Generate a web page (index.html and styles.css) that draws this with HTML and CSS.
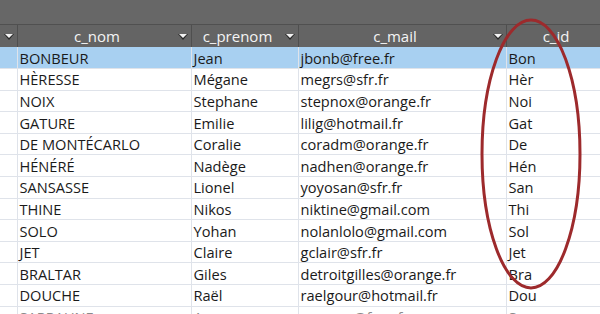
FILE: index.html
```html
<!DOCTYPE html>
<html lang="fr">
<head>
<meta charset="utf-8">
<link rel="stylesheet" href="styles.css">
</head>
<body>
<div class="sheet">
  <div class="topband"></div>
  <table class="grid">
    <colgroup>
      <col class="c0"><col class="c1"><col class="c2"><col class="c3"><col class="c4">
    </colgroup>
    <thead>
      <tr>
        <th><span class="arrow"></span></th>
        <th><span class="lbl">c_nom</span><span class="arrow"></span></th>
        <th><span class="lbl">c_prenom</span><span class="arrow"></span></th>
        <th><span class="lbl">c_mail</span><span class="arrow"></span></th>
        <th><span class="lbl">c_id</span><span class="arrow"></span></th>
      </tr>
    </thead>
    <tbody>
      <tr class="sel"><td></td><td>BONBEUR</td><td>Jean</td><td>jbonb@free.fr</td><td>Bon</td></tr>
      <tr><td></td><td>HÈRESSE</td><td>Mégane</td><td>megrs@sfr.fr</td><td>Hèr</td></tr>
      <tr><td></td><td>NOIX</td><td>Stephane</td><td>stepnox@orange.fr</td><td>Noi</td></tr>
      <tr><td></td><td>GATURE</td><td>Emilie</td><td>lilig@hotmail.fr</td><td>Gat</td></tr>
      <tr><td></td><td>DE MONTÉCARLO</td><td>Coralie</td><td>coradm@orange.fr</td><td>De</td></tr>
      <tr><td></td><td>HÉNÉRÉ</td><td>Nadège</td><td>nadhen@orange.fr</td><td>Hén</td></tr>
      <tr><td></td><td>SANSASSE</td><td>Lionel</td><td>yoyosan@sfr.fr</td><td>San</td></tr>
      <tr><td></td><td>THINE</td><td>Nikos</td><td>niktine@gmail.com</td><td>Thi</td></tr>
      <tr><td></td><td>SOLO</td><td>Yohan</td><td>nolanlolo@gmail.com</td><td>Sol</td></tr>
      <tr><td></td><td>JET</td><td>Claire</td><td>gclair@sfr.fr</td><td>Jet</td></tr>
      <tr><td></td><td>BRALTAR</td><td>Giles</td><td>detroitgilles@orange.fr</td><td>Bra</td></tr>
      <tr><td></td><td>DOUCHE</td><td>Raël</td><td>raelgour@hotmail.fr</td><td>Dou</td></tr>
      <tr class="last"><td></td><td>SARRAUNE</td><td>Aurore</td><td>aurosar@free.fr</td><td>Sar</td></tr>
    </tbody>
  </table>
  <svg class="circle" width="600" height="314" viewBox="0 0 600 314">
    <ellipse cx="531" cy="154" rx="49" ry="134" fill="none" stroke="#9d2a2c" stroke-width="3"/>
  </svg>
</div>
</body>
</html>
```
FILE: styles.css
```css
html, body {
  margin: 0;
  padding: 0;
  background: #ffffff;
  overflow: hidden;
}
.sheet {
  position: relative;
  width: 600px;
  height: 314px;
  overflow: hidden;
  font-family: "Open Sans", "Liberation Sans", sans-serif;
}
.topband {
  height: 24px;
  background: #676767;
  border-bottom: 1px solid #505050;
}
.grid {
  border-collapse: collapse;
  table-layout: fixed;
  width: 620px;
}
.c0 { width: 17px; }
.c1 { width: 174px; }
.c2 { width: 107px; }
.c3 { width: 208px; }
.c4 { width: 114px; }
.grid th {
  height: 22px;
  padding: 0;
  background: #646464;
  color: #f4f4f4;
  font-weight: normal;
  font-size: 15px;
  border-left: 1px solid #4f4f4f;
  border-right: 1px solid #4f4f4f;
  position: relative;
  text-align: center;
}
.grid th:first-child { border-left: none; }
.lbl {
  display: block;
  padding-right: 14px;
  line-height: 22px;
}
.arrow {
  position: absolute;
  right: 3px;
  top: 9px;
  width: 0;
  height: 0;
  border-left: 5px solid transparent;
  border-right: 5px solid transparent;
  border-top: 6px solid #262626;
}
.arrow::after {
  content: "";
  position: absolute;
  left: -4px;
  top: -6px;
  border-left: 4px solid transparent;
  border-right: 4px solid transparent;
  border-top: 4px solid #f2f2f2;
}
.grid td {
  height: 21.6px;
  padding: 0 0 0 2px;
  font-size: 14.6px;
  color: #1a1a1a;
  border-bottom: 1px solid #dfe3ea;
  border-left: 1px solid #dfe3ea;
  white-space: nowrap;
  overflow: hidden;
  line-height: 20px;
  box-sizing: border-box;
}
.grid td:first-child { border-left: none; }
.grid tr.sel td { background: #a8d0f1; }
.grid tr.last td { color: #8a8a8a; }
.circle {
  position: absolute;
  left: 0;
  top: 0;
  pointer-events: none;
}
```
